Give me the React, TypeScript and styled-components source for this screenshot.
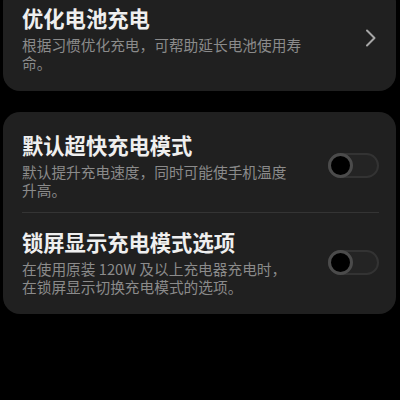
import React, { useState } from 'react';
import styled, { createGlobalStyle } from 'styled-components';

const GlobalStyle = createGlobalStyle`
  html, body {
    margin: 0;
    padding: 0;
    background: #000;
  }
  body {
    font-family: "Noto Sans CJK SC", "Noto Sans", sans-serif;
    -webkit-font-smoothing: antialiased;
  }
`;

type Setting = {
  title: string;
  desc: string;
  kind: 'link' | 'toggle';
  textWidth: number;
  pad: string;
};

const topCard: Setting[] = [
  {
    title: '优化电池充电',
    desc: '根据习惯优化充电，可帮助延长电池使用寿命。',
    kind: 'link',
    textWidth: 290,
    pad: '4px 17px 19px 19px',
  },
];

const modeCard: Setting[] = [
  {
    title: '默认超快充电模式',
    desc: '默认提升充电速度，同时可能使手机温度升高。',
    kind: 'toggle',
    textWidth: 272,
    pad: '19px 17px 13px 19px',
  },
  {
    title: '锁屏显示充电模式选项',
    desc: '在使用原装 120W 及以上充电器充电时，在锁屏显示切换充电模式的选项。',
    kind: 'toggle',
    textWidth: 272,
    pad: '15px 17px 18px 19px',
  },
];

const Chevron: React.FC = () => (
  <svg width="12" height="18" viewBox="0 0 12 18">
    <polyline
      points="2,1.5 9.5,9 2,16.5"
      fill="none"
      stroke="#a6a6a6"
      strokeWidth="2"
      strokeLinecap="round"
      strokeLinejoin="round"
    />
  </svg>
);

const Row: React.FC<{ item: Setting }> = ({ item }) => {
  const [on, setOn] = useState(false);
  return (
    <StyledRow $pad={item.pad}>
      <StyledText $width={item.textWidth}>
        <div className="title">{item.title}</div>
        <div className="desc">{item.desc}</div>
      </StyledText>
      {item.kind === 'link' ? (
        <StyledChevron>
          <Chevron />
        </StyledChevron>
      ) : (
        <Toggle $on={on} onClick={() => setOn(!on)}>
          <span className="knob" />
        </Toggle>
      )}
    </StyledRow>
  );
};

const App: React.FC = () => {
  return (
    <StyledPage>
      <GlobalStyle />
      <TopCard>
        {topCard.map((item) => (
          <Row key={item.title} item={item} />
        ))}
      </TopCard>
      <Card>
        {modeCard.map((item, i) => (
          <React.Fragment key={item.title}>
            {i > 0 && <Divider />}
            <Row item={item} />
          </React.Fragment>
        ))}
      </Card>
    </StyledPage>
  );
};

const StyledPage = styled.div`
  height: 400px;
  overflow: hidden;
  padding: 0 4px 0 3px;
  display: flex;
  flex-direction: column;
  gap: 21px;
`;

const Card = styled.div`
  background: #202020;
  border-radius: 17px;
`;

const TopCard = styled(Card)`
  margin-top: -15px;
  padding-top: 15px;
`;

const StyledRow = styled.div<{ $pad: string }>`
  display: flex;
  align-items: center;
  padding: ${(p) => p.$pad};
`;

const StyledText = styled.div<{ $width: number }>`
  width: ${(p) => p.$width}px;
  .title {
    color: #efefef;
    font-size: 21.3px;
    font-weight: 700;
    line-height: 28px;
  }
  .desc {
    margin-top: 4px;
    color: #8b8b8b;
    font-size: 14.7px;
    line-height: 18px;
  }
`;

const StyledChevron = styled.div`
  margin-left: auto;
  display: flex;
  align-items: center;
  padding-right: 2px;
`;

const Toggle = styled.div<{ $on: boolean }>`
  margin-left: auto;
  box-sizing: border-box;
  width: 51px;
  height: 25px;
  border-radius: 13px;
  border: 2px solid #333333;
  background: ${(p) => (p.$on ? '#2f6ff0' : '#242424')};
  position: relative;
  cursor: pointer;
  .knob {
    position: absolute;
    top: -2px;
    left: ${(p) => (p.$on ? '24px' : '-2px')};
    box-sizing: border-box;
    width: 25px;
    height: 25px;
    border-radius: 50%;
    border: 3px solid #4b4b4b;
    background: #000;
  }
`;

const Divider = styled.div`
  height: 1px;
  background: #343434;
  margin: 0 17px 0 19px;
`;

export default App;
